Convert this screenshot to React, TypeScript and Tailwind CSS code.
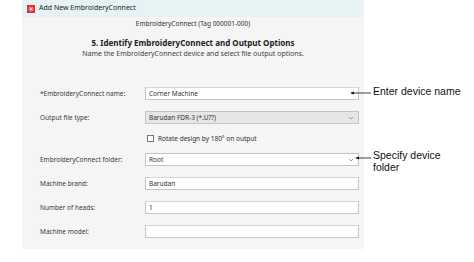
import React from 'react';

const ui = { fontFamily: '"Noto Sans", "Open Sans", sans-serif' };
const callout = { fontFamily: '"Liberation Sans", Arial, sans-serif' };

function Chevron() {
    return (
        <svg width="6" height="4" viewBox="0 0 6 4" className="shrink-0">
            <path d="M1 1 L3 3 L5 1" fill="none" stroke="#8a8a8a" strokeWidth="0.8" />
        </svg>
    );
}

function Row({ label, children, className = '' }: { label: string; children: React.ReactNode; className?: string }) {
    return (
        <div className={`flex items-center h-[13px] ${className}`}>
            <div className="w-[105px] text-[6.5px] text-[#3a3a3a]">{label}</div>
            {children}
        </div>
    );
}

function TextBox({ value = '' }: { value?: string }) {
    return (
        <div className="w-[214px] h-[13px] bg-white border border-[#c4c4c4] border-t-[#d6d6d6] flex items-center px-[3px] text-[6.5px] text-[#333]">
            {value}
        </div>
    );
}

function Select({ value, disabled }: { value: string; disabled?: boolean }) {
    return (
        <div
            className={`w-[214px] h-[13px] border border-[#c4c4c4] flex items-center justify-between pl-[3px] pr-[4px] text-[6.5px] text-[#333] ${
                disabled ? 'bg-[#e6e6e6]' : 'bg-white'
            }`}
        >
            <span>{value}</span>
            <Chevron />
        </div>
    );
}

export default function App() {
    return (
        <div className="relative w-[474px] h-[262px] bg-white overflow-hidden">
            <div className="ml-[22px] w-[342px] h-[249px] bg-[#f5f5f5] flex flex-col" style={ui}>
                <div className="h-[17px] bg-[#e7f2f5] flex items-center pl-[5px] gap-[4px]">
                    <div className="w-[8px] h-[8px] bg-[#e0303a] flex items-center justify-center">
                        <svg width="6" height="6" viewBox="0 0 6 6">
                            <path d="M3 0.5 V5.5 M0.5 3 H5.5 M1.2 1.2 L4.8 4.8 M4.8 1.2 L1.2 4.8" stroke="#fff" strokeWidth="0.6" />
                        </svg>
                    </div>
                    <span className="text-[7px] text-[#222]">Add New EmbroideryConnect</span>
                </div>

                <div className="text-center text-[6.5px] text-[#333] mt-[2px] leading-[9px]">EmbroideryConnect (Tag 000001-000)</div>
                <div className="text-center text-[8px] font-bold text-[#222] mt-[9px] leading-[11px]">
                    5. Identify EmbroideryConnect and Output Options
                </div>
                <div className="text-center text-[7px] text-[#444] leading-[9px] mt-[1px]">
                    Name the EmbroideryConnect device and select file output options.
                </div>

                <div className="flex flex-col pl-[18px] mt-[29px]">
                    <Row label="*EmbroideryConnect name:">
                        <TextBox value="Corner Machine" />
                    </Row>
                    <Row label="Output file type:" className="mt-[11px]">
                        <Select value="Barudan FDR-3 (*.U??)" disabled />
                    </Row>
                    <div className="flex items-center h-[9px] mt-[10px] pl-[107px] gap-[4px]">
                        <div className="w-[7px] h-[7px] border border-[#777] bg-white" />
                        <span className="text-[6.5px] text-[#333]">Rotate design by 180° on output</span>
                    </div>
                    <Row label="EmbroideryConnect folder:" className="mt-[10px]">
                        <Select value="Root" />
                    </Row>
                    <Row label="Machine brand:" className="mt-[11px]">
                        <TextBox value="Barudan" />
                    </Row>
                    <Row label="Number of heads:" className="mt-[11px]">
                        <TextBox value="1" />
                    </Row>
                    <Row label="Machine model:" className="mt-[11px]">
                        <TextBox />
                    </Row>
                </div>
            </div>

            <div className="absolute left-[350px] top-[86px] flex items-center" style={callout}>
                <svg width="22" height="12" viewBox="0 0 22 12" className="mt-[1px]">
                    <path d="M1 6 H21" stroke="#111" strokeWidth="0.8" />
                    <path d="M0.5 6 L4 4.5 L4 7.5 Z" fill="#111" />
                </svg>
                <span className="text-[10.5px] text-[#111] leading-[12px] -mt-[4px] ml-[1px]">Enter device name</span>
            </div>

            <div className="absolute left-[355px] top-[149px] flex items-start" style={callout}>
                <svg width="17" height="12" viewBox="0 0 17 12" className="mt-[3px]">
                    <path d="M1 6 H16" stroke="#111" strokeWidth="0.8" />
                    <path d="M0.5 6 L4 4.5 L4 7.5 Z" fill="#111" />
                </svg>
                <span className="text-[10.5px] text-[#111] leading-[12px] ml-[1px]">
                    Specify device
                    <br />
                    folder
                </span>
            </div>
        </div>
    );
}
